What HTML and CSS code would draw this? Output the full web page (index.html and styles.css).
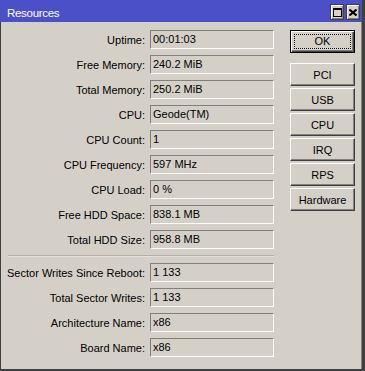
FILE: index.html
```html
<html>
  <head>
    <link rel="stylesheet" href="styles.css">
  </head>
  <body>
    <div class="window">
      <div class="titlebar">
        <span class="title">Resources</span>
        <div class="title-buttons">
          <div class="tbtn">
            <svg width="9" height="9" viewBox="0 0 9 9"><rect x="0.5" y="0.5" width="8" height="8" fill="none" stroke="#000"/><line x1="0" y1="1.5" x2="9" y2="1.5" stroke="#000"/></svg>
          </div>
          <div class="tbtn">
            <svg width="8" height="7" viewBox="0 0 8 7"><path d="M0.5 0.5 L7.5 6.5 M7.5 0.5 L0.5 6.5" stroke="#000" stroke-width="2"/></svg>
          </div>
        </div>
      </div>

      <div class="content">
        <div class="form">
          <div class="row"><label>Uptime:</label><div class="field">00:01:03</div></div>
          <div class="row"><label>Free Memory:</label><div class="field">240.2 MiB</div></div>
          <div class="row"><label>Total Memory:</label><div class="field">250.2 MiB</div></div>
          <div class="row"><label>CPU:</label><div class="field">Geode(TM)</div></div>
          <div class="row"><label>CPU Count:</label><div class="field">1</div></div>
          <div class="row"><label>CPU Frequency:</label><div class="field">597 MHz</div></div>
          <div class="row"><label>CPU Load:</label><div class="field">0 %</div></div>
          <div class="row"><label>Free HDD Space:</label><div class="field">838.1 MB</div></div>
          <div class="row"><label>Total HDD Size:</label><div class="field">958.8 MB</div></div>
          <div class="separator"></div>
          <div class="row"><label>Sector Writes Since Reboot:</label><div class="field">1 133</div></div>
          <div class="row"><label>Total Sector Writes:</label><div class="field">1 133</div></div>
          <div class="row"><label>Architecture Name:</label><div class="field">x86</div></div>
          <div class="row"><label>Board Name:</label><div class="field">x86</div></div>
        </div>

        <div class="actions">
          <div class="btn default"><span>OK</span></div>
          <div class="btn-group">
            <div class="btn">PCI</div>
            <div class="btn">USB</div>
            <div class="btn">CPU</div>
            <div class="btn">IRQ</div>
            <div class="btn">RPS</div>
            <div class="btn">Hardware</div>
          </div>
        </div>
      </div>
    </div>
  </body>
</html>
```

FILE: styles.css
```css
body { margin: 0; font-family: "Liberation Sans", Arial, sans-serif; font-size: 11px; color: #000; }
.window { width: 365px; height: 371px; box-sizing: border-box; background: #d4d0c8; border-left: 1px solid #404040; border-right: 3px solid #404040; border-bottom: 2px solid #404040; box-shadow: inset -1px 0 0 #808080; }
.titlebar { height: 22px; background: #4c50c8; display: flex; align-items: center; justify-content: space-between; padding: 0 2px 0 7px; margin-left: -1px; }
.title { color: #fff; font-size: 11.5px; letter-spacing: -0.3px; padding-top: 3px; }
.title-buttons { display: flex; gap: 2px; margin-top: 2px; }
.tbtn { width: 12px; height: 14px; background: #d4d0c8; border: 1px solid #404040; box-shadow: inset 1px 1px 0 #fff, inset -1px -1px 0 #808080; display: flex; align-items: center; justify-content: center; }
.content { display: flex; padding-top: 8px; }
.form { width: 273px; }
.row { display: flex; align-items: center; height: 19px; margin-bottom: 6px; }
.row label { width: 149px; text-align: right; padding-right: 5px; box-sizing: border-box; }
.field { width: 124px; height: 19px; box-sizing: border-box; border-top: 1px solid #808080; border-left: 1px solid #808080; border-bottom: 1px solid #fff; border-right: 1px solid #fff; padding-left: 2px; line-height: 17px; }
.separator { height: 1px; background: #b4b0a8; border-bottom: 1px solid #e4e1da; margin: 2px 0 6px 7px; width: 266px; }
.actions { margin-left: 16px; width: 65px; }
.btn { height: 23px; box-sizing: border-box; border: 1px solid; border-color: #fff #404040 #404040 #fff; box-shadow: inset -1px -1px 0 #808080; display: flex; align-items: center; justify-content: center; }
.btn.default { border: 1px solid #000; box-shadow: inset 1px 1px 0 #fff, inset -1px -1px 0 #404040, inset -2px -2px 0 #808080; padding: 3px; }
.btn.default span { flex: 1; height: 100%; border: 1px dotted #000; box-sizing: border-box; text-align: center; line-height: 13px; }
.btn-group { margin-top: 10px; display: flex; flex-direction: column; gap: 2px; }
```
